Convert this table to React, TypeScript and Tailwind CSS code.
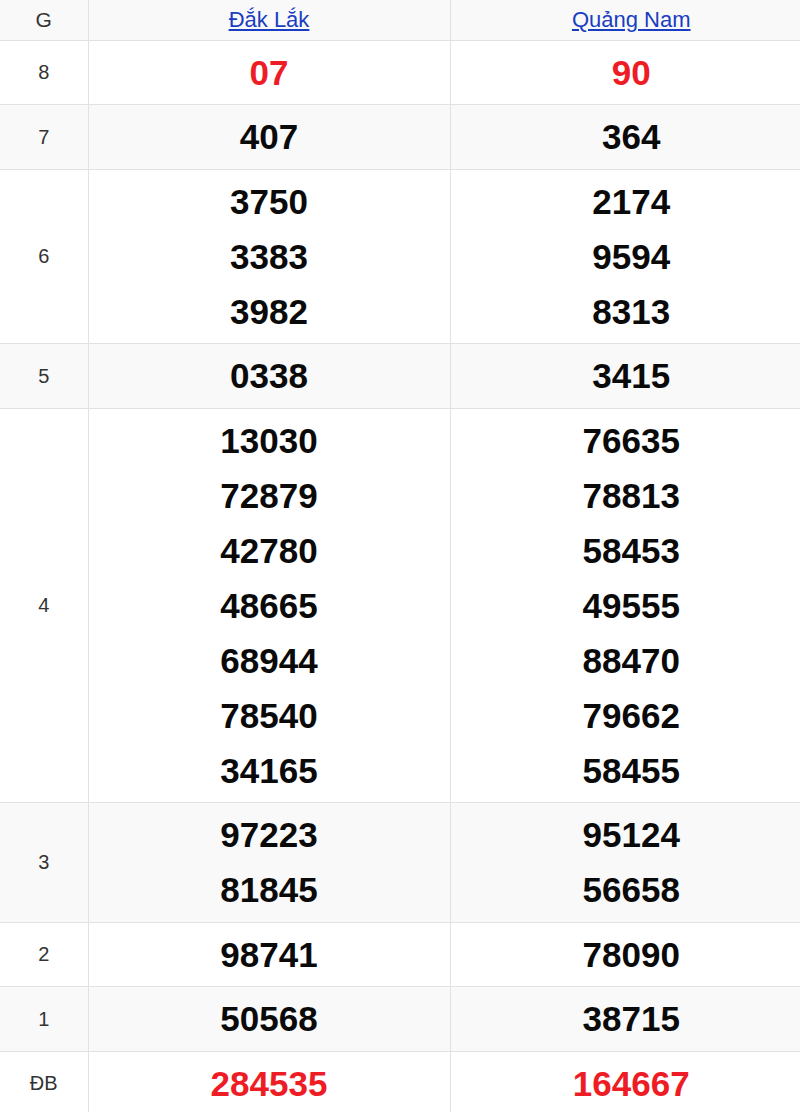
import React from "react";

type Row = { label: string; a: string[]; b: string[]; red?: boolean };

const rows: Row[] = [
  { label: "8", a: ["07"], b: ["90"], red: true },
  { label: "7", a: ["407"], b: ["364"] },
  { label: "6", a: ["3750", "3383", "3982"], b: ["2174", "9594", "8313"] },
  { label: "5", a: ["0338"], b: ["3415"] },
  {
    label: "4",
    a: ["13030", "72879", "42780", "48665", "68944", "78540", "34165"],
    b: ["76635", "78813", "58453", "49555", "88470", "79662", "58455"],
  },
  { label: "3", a: ["97223", "81845"], b: ["95124", "56658"] },
  { label: "2", a: ["98741"], b: ["78090"] },
  { label: "1", a: ["50568"], b: ["38715"] },
  { label: "ĐB", a: ["284535"], b: ["164667"], red: true },
];

function Nums({ items, red }: { items: string[]; red?: boolean }) {
  return (
    <div className="flex flex-col items-center py-[4.25px]">
      {items.map((n, i) => (
        <div
          key={i}
          className={`h-[55px] leading-[55px] text-[35px] font-bold ${red ? "text-[#ee1c25]" : "text-[#0a0a0a]"}`}
        >
          {n}
        </div>
      ))}
    </div>
  );
}

export default function App() {
  return (
    <div className="w-[800px] h-[1112px] overflow-hidden bg-white" style={{ fontFamily: '"Liberation Sans", Arial, sans-serif' }}>
      <table className="w-[812px] border-collapse table-fixed">
        <colgroup>
          <col className="w-[88px]" />
          <col className="w-[362px]" />
          <col className="w-[362px]" />
        </colgroup>
        <thead>
          <tr className="bg-[#f9f9f9] h-[40px]">
            <th className="h-[40px] border-b border-r border-[#e1e1e6] font-normal text-[21px] leading-[39px] text-[#333] p-0">G</th>
            <th className="h-[40px] border-b border-r border-[#e1e1e6] font-normal text-[22px] leading-[39px] p-0">
              <a href="#" className="text-[#1a3dc1] underline">Đắk Lắk</a>
            </th>
            <th className="h-[40px] border-b border-[#e1e1e6] font-normal text-[22px] leading-[39px] p-0">
              <a href="#" className="text-[#1a3dc1] underline">Quảng Nam</a>
            </th>
          </tr>
        </thead>
        <tbody>
          {rows.map((r, i) => (
            <tr key={r.label} className={i % 2 === 1 ? "bg-[#f9f9f9]" : "bg-white"}>
              <td className="border-b border-r border-[#e1e1e6] text-center text-[20px] text-[#333] p-0 align-middle">{r.label}</td>
              <td className="border-b border-r border-[#e1e1e6] p-0 align-middle">
                <Nums items={r.a} red={r.red} />
              </td>
              <td className="border-b border-[#e1e1e6] p-0 align-middle">
                <Nums items={r.b} red={r.red} />
              </td>
            </tr>
          ))}
        </tbody>
      </table>
    </div>
  );
}
